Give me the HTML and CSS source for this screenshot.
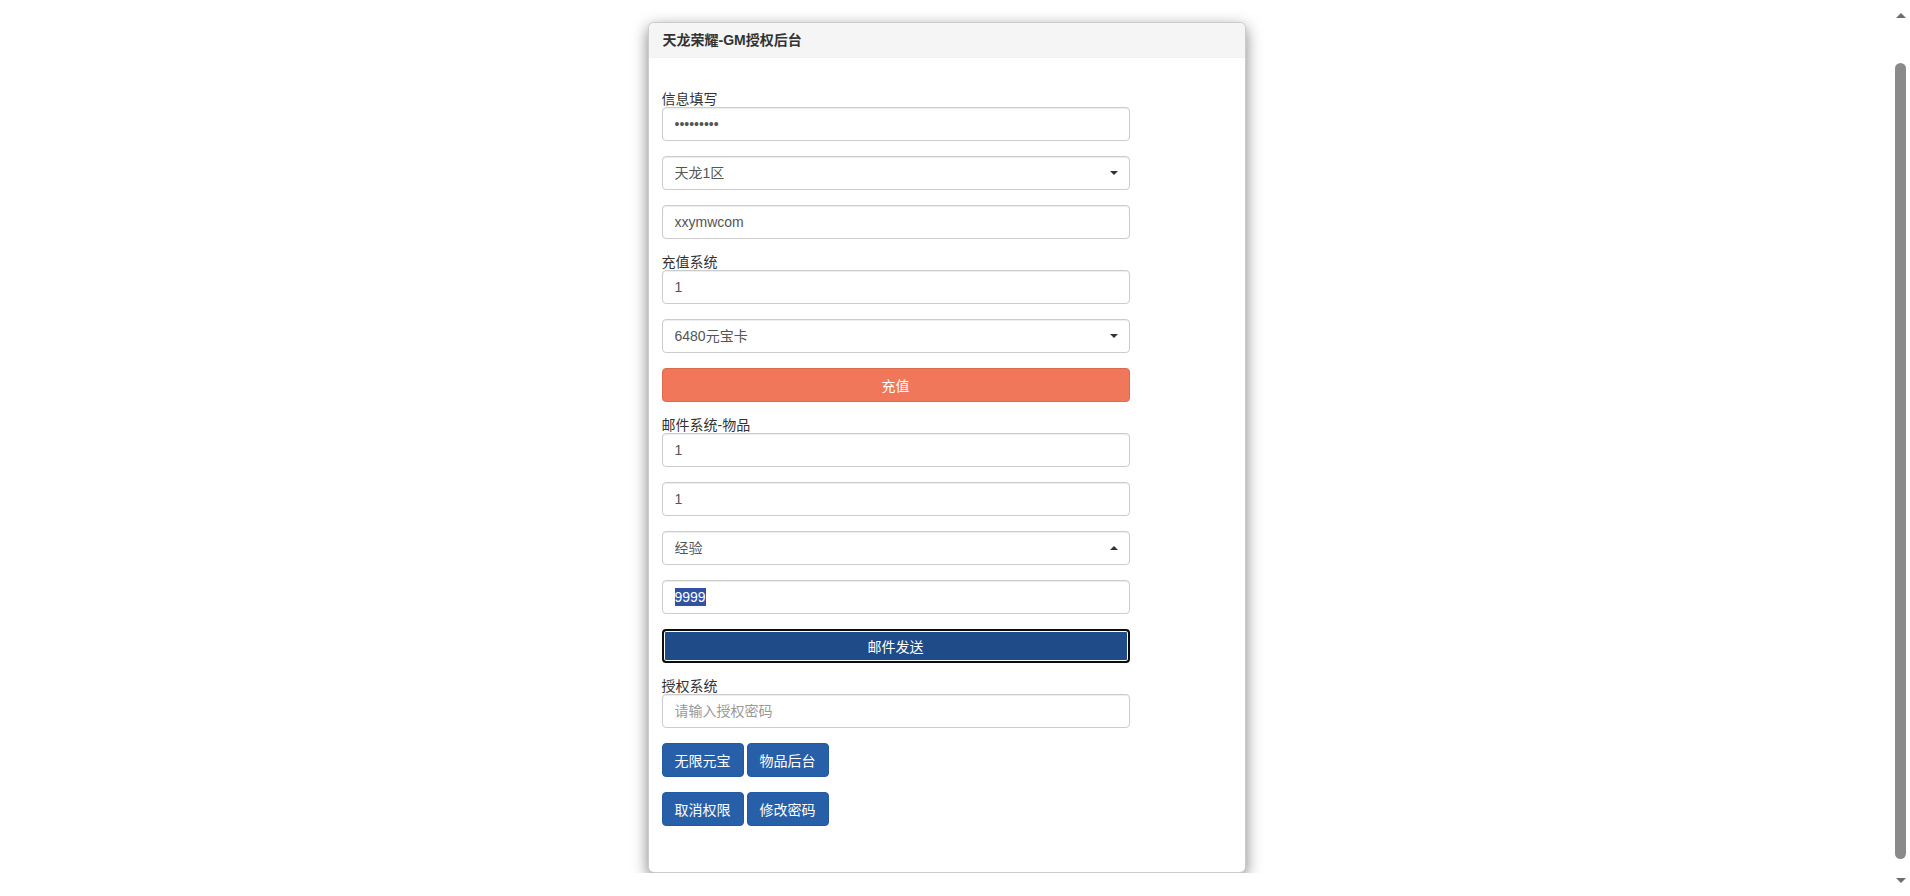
FILE: index.html
```html
<!DOCTYPE html>
<html lang="zh-CN">
<head>
    <meta charset="UTF-8">
    <meta name="viewport" content="width=device-width, initial-scale=1.0">
    <title>天龙荣耀-GM授权后台</title>
    <link rel="stylesheet" href="styles.css">
</head>
<body>

<div class="panel">
    <div class="panel-heading">天龙荣耀-GM授权后台</div>
    <div class="panel-body">
        <form id="gmForm" class="gm-form" onsubmit="return false">
            <label>信息填写</label>
            <input type="password" class="form-control" value="xxxxxxxxx">
            <div class="select-wrap">
                <select class="form-control">
                    <option>天龙1区</option>
                </select>
            </div>
            <input type="text" class="form-control" value="xxymwcom">

            <label>充值系统</label>
            <input type="text" class="form-control" value="1">
            <div class="select-wrap">
                <select class="form-control">
                    <option>6480元宝卡</option>
                </select>
            </div>
            <button type="button" class="btn btn-charge">充值</button>

            <label>邮件系统-物品</label>
            <input type="text" class="form-control" value="1">
            <input type="text" class="form-control" value="1">
            <div class="select-wrap open">
                <select class="form-control">
                    <option>经验</option>
                </select>
            </div>
            <div class="form-control"><span class="selected">9999</span></div>
            <button type="button" class="btn btn-mail">邮件发送</button>

            <label>授权系统</label>
            <input type="password" class="form-control" placeholder="请输入授权密码">
            <div class="btn-row">
                <button type="button" class="btn btn-blue">无限元宝</button>
                <button type="button" class="btn btn-blue">物品后台</button>
            </div>
            <div class="btn-row">
                <button type="button" class="btn btn-blue">取消权限</button>
                <button type="button" class="btn btn-blue">修改密码</button>
            </div>
        </form>
    </div>
</div>

<!-- window scrollbar -->
<div class="scrollbar">
    <span class="arrow up"></span>
    <span class="thumb"></span>
    <span class="arrow down"></span>
</div>

</body>
</html>
```

FILE: styles.css
```css
body {
    margin: 0;
    padding: 22px 17px 0 0;
    font-family: "Liberation Sans", Arial, "Noto Sans CJK SC", sans-serif;
    font-size: 14px;
    color: #333;
    background: #fff;
}

.panel {
    width: 598px;
    margin: 0 auto;
    box-sizing: border-box;
    background-color: #fff;
    border: 1px solid rgba(0, 0, 0, 0.2);
    border-radius: 6px;
    box-shadow: 0 5px 15px rgba(0, 0, 0, 0.5);
}
.panel-heading {
    height: 35px;
    line-height: 34px;
    padding: 0 14px;
    background-color: #f5f5f5;
    border-bottom: 1px solid #f2f2f2;
    border-radius: 5px 5px 0 0;
    font-weight: bold;
    font-size: 14px;
    color: #333;
    box-sizing: border-box;
}
.panel-body {
    padding: 33px 13px 31px;
}
.gm-form {
    width: 468px;
    display: flex;
    flex-direction: column;
}
.gm-form label {
    display: block;
    line-height: 16px;
    height: 16px;
    color: #333;
}
.form-control {
    display: block;
    width: 100%;
    height: 34px;
    margin: 0 0 15px;
    padding: 0 12px;
    box-sizing: border-box;
    font-family: inherit;
    font-size: 14px;
    line-height: 32px;
    color: #555;
    background-color: #fff;
    border: 1px solid #ccc;
    border-radius: 4px;
    box-shadow: inset 0 1px 1px rgba(0, 0, 0, 0.075);
    outline: none;
}
.form-control::placeholder {
    color: #999;
}
.selected {
    background-color: #3152a3;
    color: #fff;
    padding: 1px 0;
}
.select-wrap {
    position: relative;
}
.select-wrap select {
    -webkit-appearance: none;
    appearance: none;
}
.select-wrap::after {
    content: "";
    position: absolute;
    right: 12px;
    top: 15px;
    border-left: 4px solid transparent;
    border-right: 4px solid transparent;
    border-top: 4px solid #333;
    pointer-events: none;
}
.select-wrap.open::after {
    border-top: none;
    border-bottom: 4px solid #333;
}
.btn {
    display: block;
    height: 34px;
    padding: 0 12px;
    margin: 0 0 15px;
    font-family: inherit;
    font-size: 14px;
    color: #fff;
    border: 1px solid transparent;
    border-radius: 4px;
    cursor: pointer;
    box-sizing: border-box;
}
.btn-charge {
    width: 100%;
    background-color: #f0775a;
    border-color: #dc6a50;
}
.btn-mail {
    width: 100%;
    background-color: #1f4b88;
    border: 2px solid #0d0d0d;
    box-shadow: inset 0 0 0 1px #fff;
}
.btn-row {
    display: flex;
    gap: 3px;
}
.btn-blue {
    width: 82px;
    padding: 0;
    background-color: #2760a9;
    border-color: #2359a0;
}

.scrollbar {
    position: fixed;
    top: 0;
    right: 0;
    width: 17px;
    height: 100%;
    background: #fff;
}
.scrollbar .thumb {
    position: absolute;
    top: 63px;
    bottom: 37px;
    left: 2px;
    width: 11px;
    background: #8a8a8a;
    border-radius: 6px;
}
.scrollbar .arrow {
    position: absolute;
    left: 3px;
    border-left: 5px solid transparent;
    border-right: 5px solid transparent;
}
.scrollbar .up {
    top: 13px;
    border-bottom: 5px solid #6e6e6e;
}
.scrollbar .down {
    bottom: 13px;
    border-top: 5px solid #6e6e6e;
}
```
